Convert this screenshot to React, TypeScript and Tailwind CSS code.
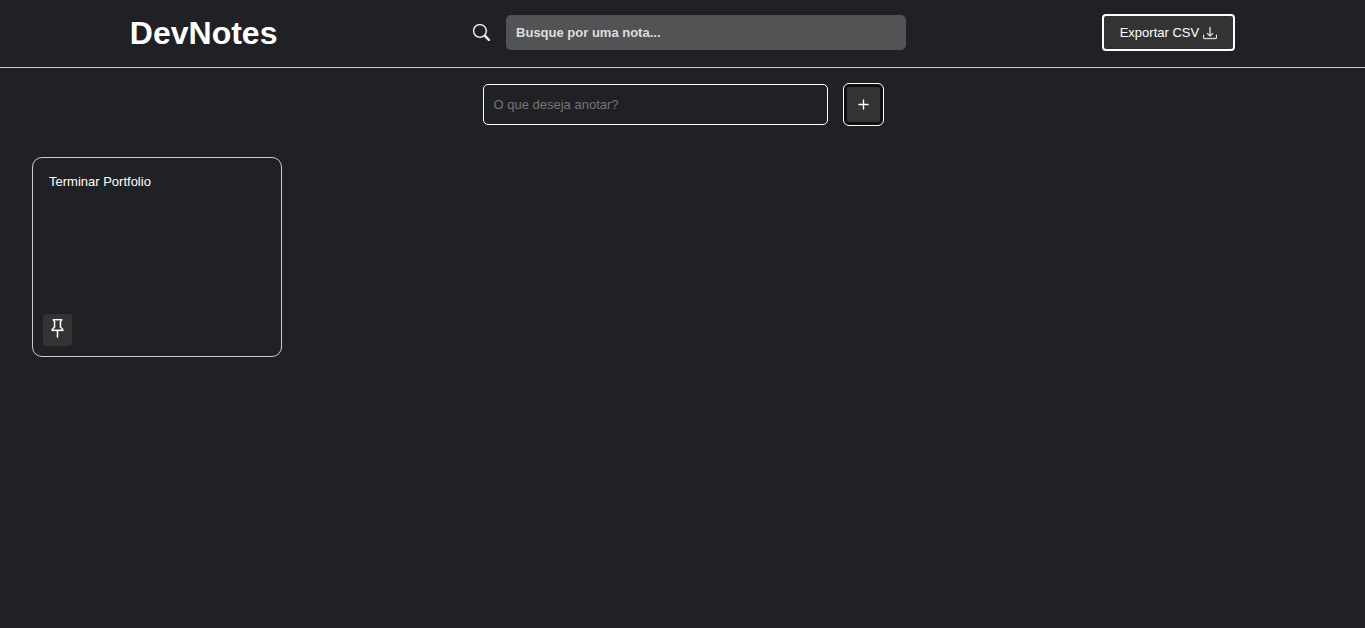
import { useState } from 'react'
import type { FormEvent } from 'react'
import { BsDownload, BsPin, BsPlus, BsSearch } from 'react-icons/bs'

interface Note {
  id: number
  content: string
}

interface NoteCardProps {
  note: Note
}

function NoteCard({ note }: NoteCardProps) {
  const [text, setText] = useState(note.content)

  return (
    <article className="relative h-[200px] w-[250px] rounded-[10px] border border-[#ccc]">
      <textarea
        aria-label="Nota"
        value={text}
        onChange={(e) => setText(e.target.value)}
        className="h-full w-full resize-none overflow-hidden bg-transparent p-4 text-[13px] leading-4 text-white outline-none"
      />
      <button
        aria-label="Fixar nota"
        className="absolute bottom-2.5 left-2.5 flex h-8 w-[29px] items-center justify-center rounded-[3px] bg-[#333] pb-1"
      >
        <BsPin className="h-[19px] w-[19px] stroke-white stroke-[0.3]" />
      </button>
    </article>
  )
}

export default function App() {
  const [notes, setNotes] = useState<Note[]>([{ id: 1, content: 'Terminar Portfolio' }])
  const [draft, setDraft] = useState('')
  const [search, setSearch] = useState('')

  const handleAdd = (e: FormEvent) => {
    e.preventDefault()
    if (!draft.trim()) return
    setNotes([...notes, { id: Date.now(), content: draft }])
    setDraft('')
  }

  const visibleNotes = notes.filter((note) =>
    note.content.toLowerCase().includes(search.toLowerCase())
  )

  return (
    <div className="min-h-screen bg-[#202124] font-['Liberation_Sans',Arial,sans-serif] text-white">
      {/* Header */}
      <header className="flex items-center justify-around border-b border-[#ccc] px-8 pt-3.5 pb-4">
        <h1 className="text-[32px] leading-9 font-bold">DevNotes</h1>
        <div className="flex items-center gap-4">
          <label htmlFor="search" aria-label="Buscar">
            <BsSearch className="h-[17px] w-[17px] stroke-white stroke-[0.3]" />
          </label>
          <input
            id="search"
            type="text"
            placeholder="Busque por uma nota..."
            value={search}
            onChange={(e) => setSearch(e.target.value)}
            className="h-[35px] w-[400px] rounded-[5px] bg-[#525355] px-2.5 text-[13px] font-bold outline-none placeholder:text-[#ddd]"
          />
        </div>
        <button className="flex h-[37px] items-center gap-1 rounded-[4px] border-2 border-white bg-[#333] px-4 text-[13px]">
          Exportar CSV
          <BsDownload className="h-3.5 w-3.5 stroke-white stroke-[0.3]" />
        </button>
      </header>

      {/* New note */}
      <form onSubmit={handleAdd} className="mt-4 flex items-center justify-center gap-4">
        <input
          type="text"
          aria-label="Nova nota"
          placeholder="O que deseja anotar?"
          value={draft}
          onChange={(e) => setDraft(e.target.value)}
          className="h-[41px] w-[345px] rounded-[5px] border border-white bg-transparent px-2.5 text-[13px] outline-none placeholder:text-[#757575]"
        />
        <button
          type="submit"
          aria-label="Adicionar nota"
          className="flex h-[41px] w-[39px] items-center justify-center rounded-[5px] border-[3px] border-[#101010] bg-[#333] outline outline-white"
        >
          <BsPlus className="h-[21px] w-[21px]" />
        </button>
      </form>

      {/* Notes */}
      <main className="flex flex-wrap gap-8 p-8">
        {visibleNotes.map((note) => (
          <NoteCard key={note.id} note={note} />
        ))}
      </main>
    </div>
  )
}
